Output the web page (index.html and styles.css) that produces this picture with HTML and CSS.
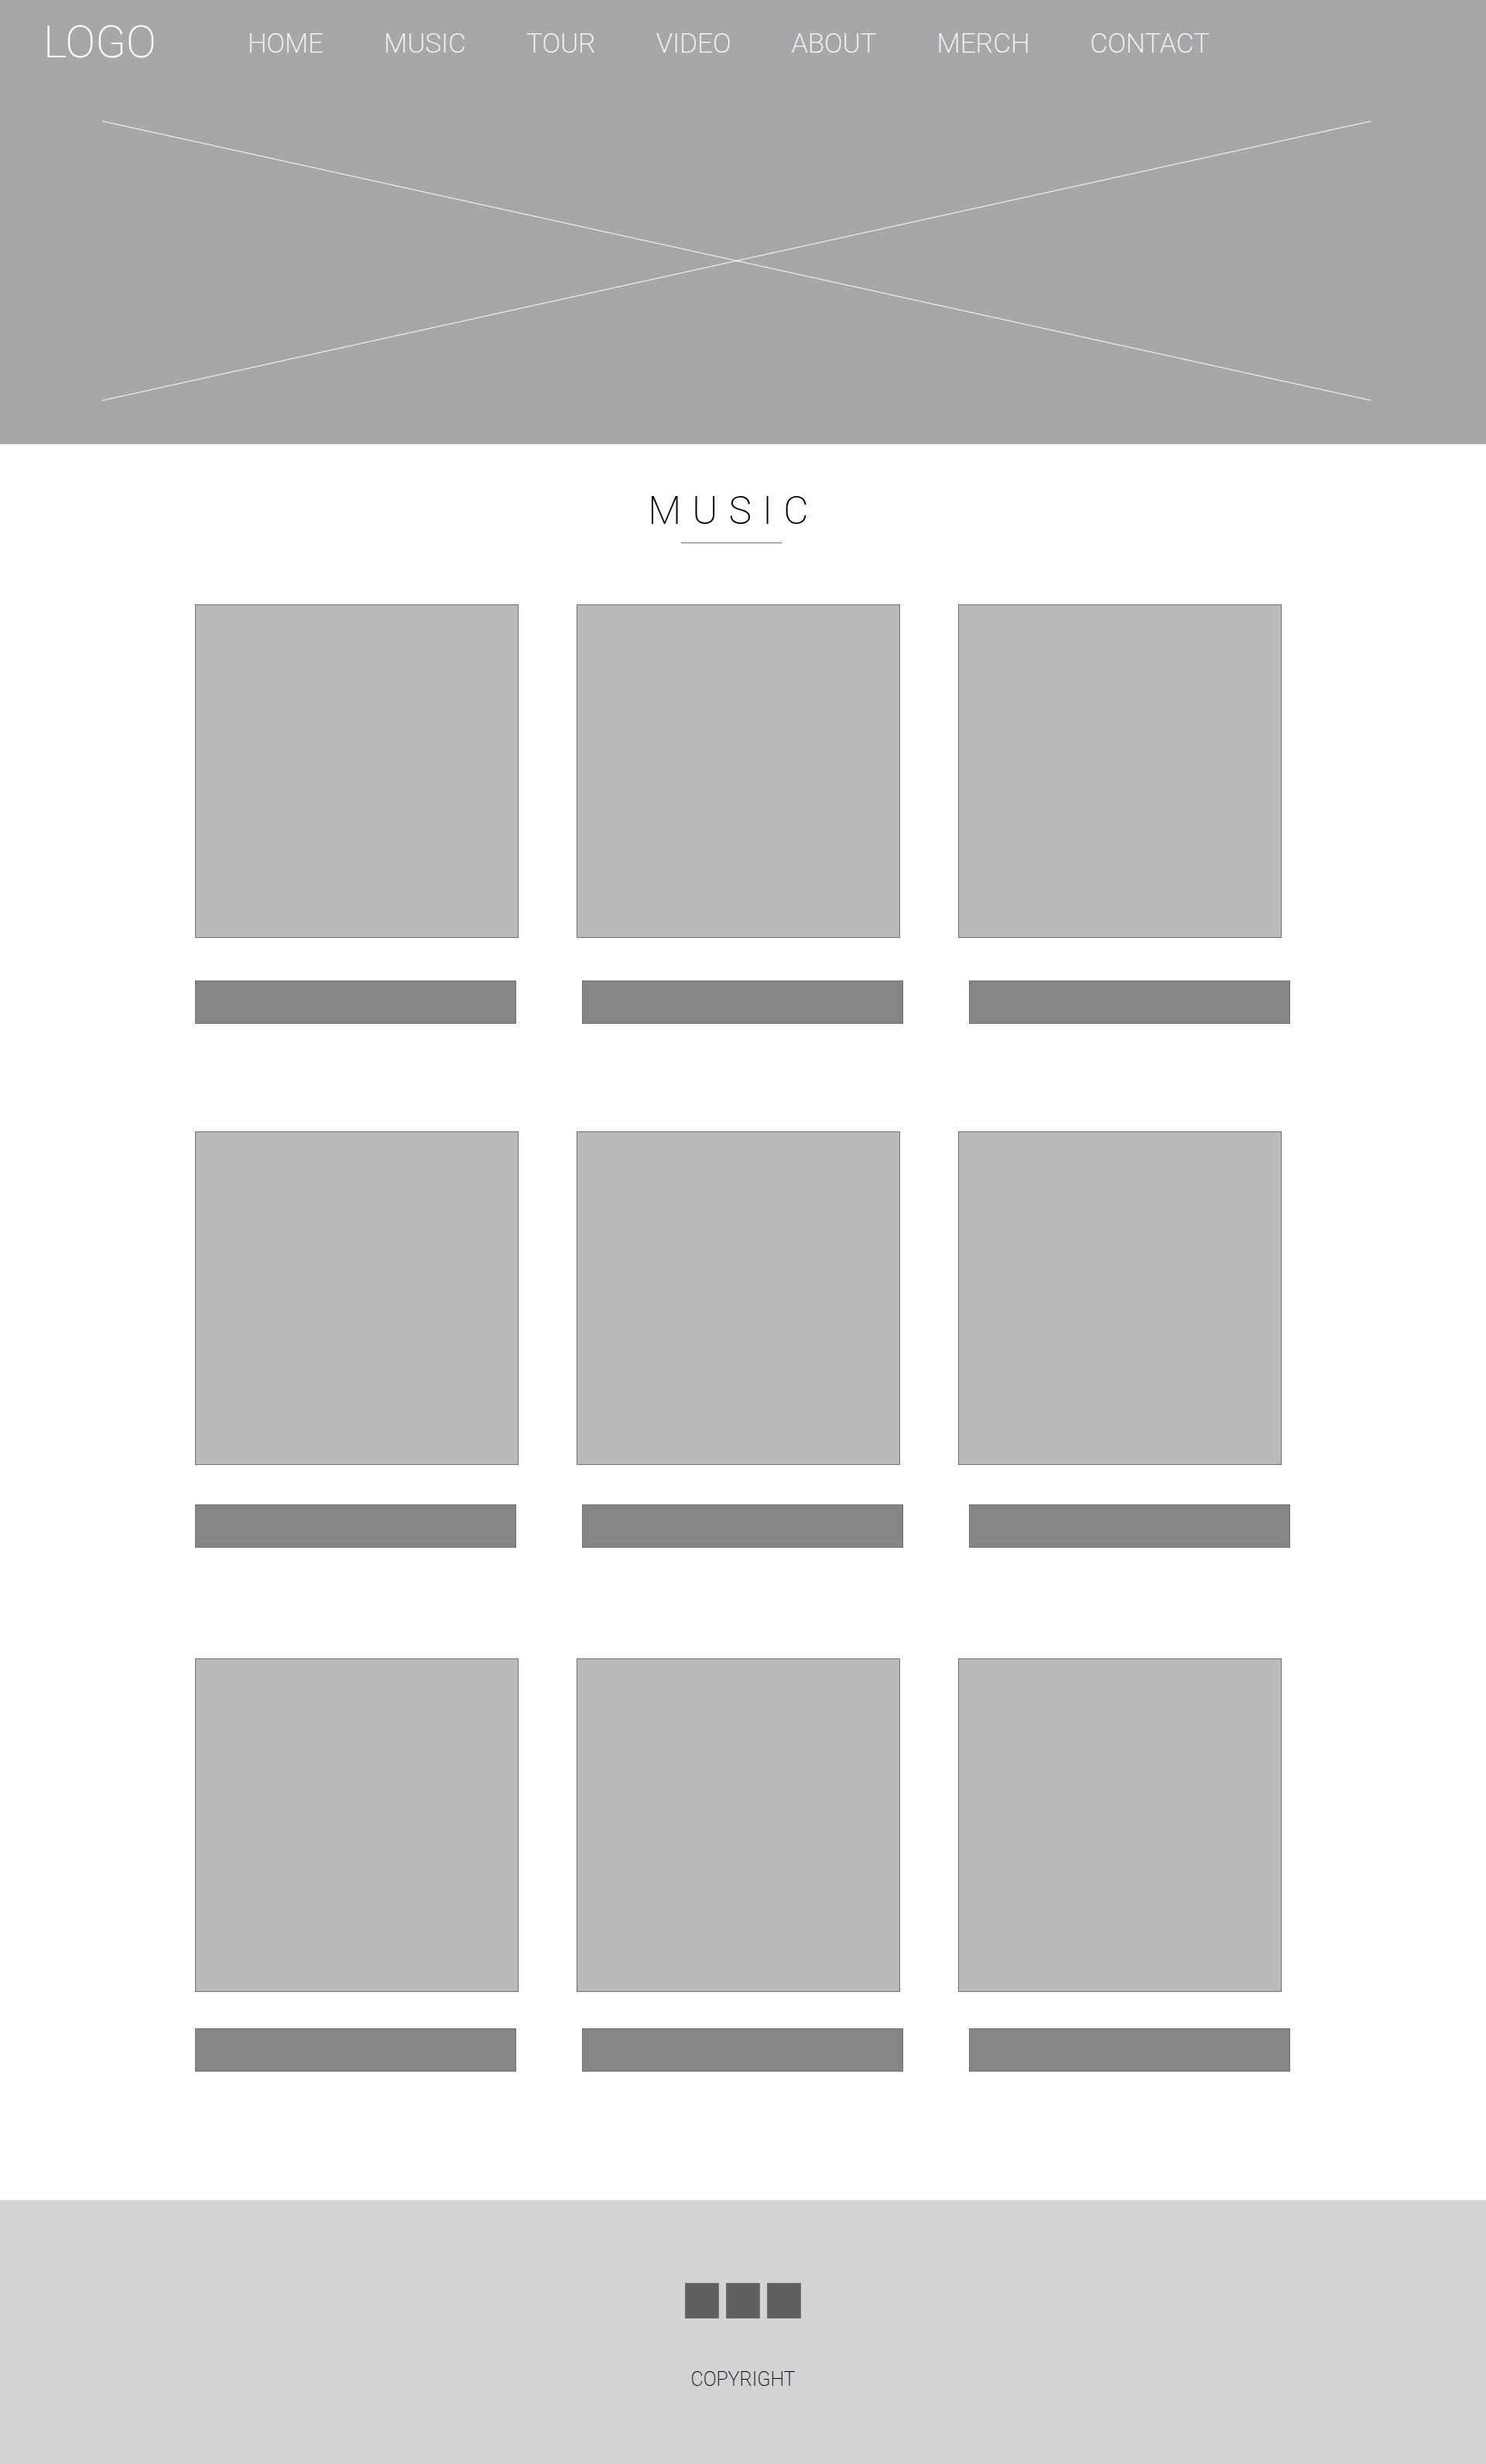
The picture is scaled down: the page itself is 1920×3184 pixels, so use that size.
FILE: index.html
```html
<!DOCTYPE html>
<html lang="en">
<head>
<meta charset="utf-8">
<meta name="viewport" content="width=device-width, initial-scale=1">
<title>Music</title>
<link rel="stylesheet" href="styles.css">
</head>
<body>
<header class="hero">
  <div class="bar">
    <a class="logo" href="#">LOGO</a>
    <nav class="nav" aria-label="Main">
      <a href="#">HOME</a>
      <a href="#music">MUSIC</a>
      <a href="#">TOUR</a>
      <a href="#">VIDEO</a>
      <a href="#">ABOUT</a>
      <a href="#">MERCH</a>
      <a href="#">CONTACT</a>
    </nav>
  </div>
  <svg class="hero-image" viewBox="0 0 1640 362" preserveAspectRatio="none" aria-hidden="true">
    <path d="M0 0.5 1640 361.5M0 361.5 1640 0.5" vector-effect="non-scaling-stroke"/>
  </svg>
</header>
<main class="music" id="music">
  <div class="heading">
    <h1 class="title">MUSIC</h1>
    <hr class="rule">
  </div>
  <section class="group">
    <div class="covers"><div class="cover"></div><div class="cover"></div><div class="cover"></div></div>
    <div class="labels"><div class="label"></div><div class="label"></div><div class="label"></div></div>
  </section>
  <section class="group group-second">
    <div class="covers"><div class="cover"></div><div class="cover"></div><div class="cover"></div></div>
    <div class="labels"><div class="label"></div><div class="label"></div><div class="label"></div></div>
  </section>
  <section class="group group-third">
    <div class="covers"><div class="cover"></div><div class="cover"></div><div class="cover"></div></div>
    <div class="labels"><div class="label"></div><div class="label"></div><div class="label"></div></div>
  </section>
</main>
<footer class="footer">
  <div class="social">
    <a class="social-link" href="#" aria-label="Facebook"></a>
    <a class="social-link" href="#" aria-label="Twitter"></a>
    <a class="social-link" href="#" aria-label="Instagram"></a>
  </div>
  <p class="copyright">COPYRIGHT</p>
</footer>
</body>
</html>
```
FILE: styles.css
```css
* {
  box-sizing: border-box;
}

body {
  margin: 0;
  background: #fff;
  color: #000;
  font-family: Roboto, "Liberation Sans", sans-serif;
  font-weight: 200;
}

a {
  color: inherit;
  text-decoration: none;
}

/* Header */
.hero {
  padding-bottom: 56px;
  background: #a7a7a7;
  color: #fff;
}

.bar {
  display: flex;
  flex-wrap: wrap;
  align-items: center;
  gap: 0 118px;
  padding: 24px 56px 0;
}

.logo {
  font-size: 58px;
  line-height: 60px;
}

.nav {
  display: flex;
  flex-wrap: wrap;
  gap: 0 78px;
  padding-top: 6px;
  font-size: 35px;
  line-height: 40px;
}

.hero-image {
  display: block;
  width: 85.4%;
  height: 362px;
  margin: 72px 0 0 6.85%;
  fill: none;
  stroke: #fff;
  stroke-width: 1;
}

/* Music grid */
.music {
  padding: 56px 13.125% 166px;
}

.heading {
  padding-right: 30px;
}

.title {
  margin: 0;
  padding-left: 6px;
  font-size: 50px;
  font-weight: 200;
  line-height: 60px;
  letter-spacing: 14px;
  text-align: center;
}

.rule {
  width: 130px;
  height: 1px;
  margin: 11px auto 79px;
  border: 0;
  background: #707070;
}

.group {
  --label-gap: 55px;
}

.group-second {
  --label-gap: 51px;
  margin-top: 139px;
}

.group-third {
  --label-gap: 47px;
  margin-top: 143px;
}

.covers,
.labels {
  display: grid;
  grid-template-columns: repeat(3, 1fr);
}

.covers {
  gap: 75px;
  margin-right: 12px;
}

.labels {
  gap: 85px;
  margin: var(--label-gap) 1px 0 0;
}

.cover {
  aspect-ratio: 418 / 431;
  border: 1px solid #707070;
  background: #bababa;
}

.label {
  height: 56px;
  border: 1px solid #707070;
  background: #868686;
}

/* Footer */
.footer {
  padding: 107px 24px 93px;
  background: #d3d3d3;
  text-align: center;
}

.social {
  display: flex;
  justify-content: center;
  gap: 9px;
}

.social-link {
  width: 44px;
  height: 46px;
  border: 1px solid #707070;
  background: #606060;
}

.copyright {
  margin: 63px 0 0;
  font-size: 25px;
  line-height: 32px;
}
```
